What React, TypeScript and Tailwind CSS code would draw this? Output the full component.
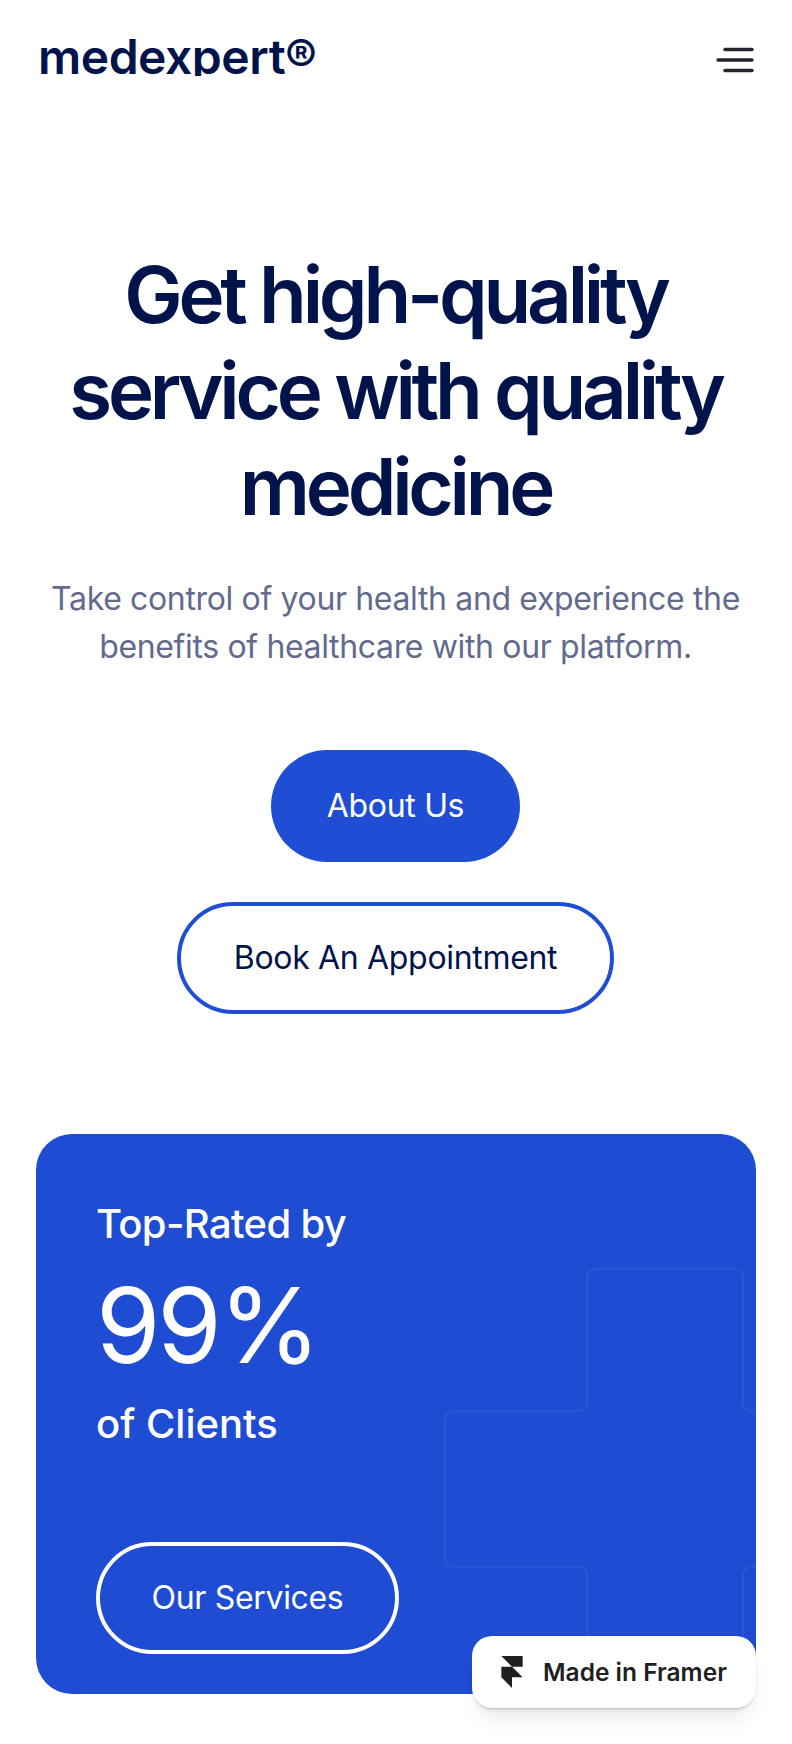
const navy = "text-[#00134a]";

function MenuIcon() {
  return (
    <svg width="38" height="26" viewBox="0 0 38 26" fill="none" stroke="#22242e" strokeWidth="3.4" strokeLinecap="round">
      <path d="M9 2.5h27" />
      <path d="M2 13h34" />
      <path d="M9 23.5h27" />
    </svg>
  );
}

function FramerMark() {
  return (
    <svg width="22" height="32" viewBox="0 0 14 21" fill="#1f1f1f">
      <path d="M0 0h14v7H7zM0 7h7l7 7H7v7l-7-7z" />
    </svg>
  );
}

function PlusOutline() {
  return (
    <svg className="absolute left-0 top-0" width="720" height="560" viewBox="0 0 720 560" fill="none" stroke="#ffffff" strokeOpacity="0.1" strokeWidth="1.2">
      <path d="M551 143a8 8 0 0 1 8 -8h140a8 8 0 0 1 8 8v126a8 8 0 0 0 8 8h5" />
      <path d="M551 143v126a8 8 0 0 1 -8 8H417a8 8 0 0 0 -8 8v140a8 8 0 0 0 8 8h126a8 8 0 0 1 8 8v80" />
      <path d="M707 560v-119a8 8 0 0 1 8 -8h5" />
    </svg>
  );
}

export default function App() {
  return (
    <main className="relative h-[1744px] overflow-hidden bg-white font-['Inter',sans-serif]">
      {/* Header */}
      <header className="flex items-start justify-between pl-[38px] pr-[38px] pt-[30px]">
        <div className={`h-[46px] overflow-hidden text-[48px] font-semibold leading-[54px] tracking-[-0.01em] ${navy}`}>
          medexpert®
        </div>
        <div className="pt-[17px]">
          <MenuIcon />
        </div>
      </header>

      {/* Hero */}
      <section className="mt-[171px] flex flex-col items-center pl-[36px] pr-[37px] text-center">
        <h1 className={`text-[78px] font-semibold leading-[96px] tracking-[-0.054em] ${navy}`}>
          Get high-quality
          <br />
          service with quality
          <br />
          medicine
        </h1>
        <p className="mt-[40px] text-[32px] leading-[48px] tracking-[-0.011em] text-[#636a8c]">
          Take control of your health and experience the
          <br />
          benefits of healthcare with our platform.
        </p>
        <div className="mt-[79px] flex flex-col items-center gap-[40px]">
          <a className="flex h-[112px] w-[249px] items-center justify-center rounded-[56px] bg-[#1f4dd4] text-[32px] tracking-[-0.01em] text-white">
            About Us
          </a>
          <a className={`flex h-[112px] w-[437px] items-center justify-center rounded-[56px] border-4 border-[#1f4dd4] text-[32px] tracking-[-0.01em] ${navy}`}>
            Book An Appointment
          </a>
        </div>
      </section>

      {/* Rating card */}
      <section className="relative mx-[36px] mt-[120px] h-[560px] overflow-hidden rounded-[36px] bg-[#1e4cd3] pl-[60px] pt-[66px] text-white">
        <PlusOutline />
        <div className="relative flex flex-col items-start">
          <p className="text-[40px] font-medium leading-[48px] tracking-[-0.016em]">Top-Rated by</p>
          <p className="mt-[21px] text-[104px] leading-[112px] tracking-[-0.03em]">99%</p>
          <p className="mt-[19px] text-[40px] font-medium leading-[48px]">of Clients</p>
          <a className="mt-[94px] flex h-[112px] w-[303px] items-center justify-center rounded-[56px] border-4 border-white text-[32px] tracking-[-0.01em]">
            Our Services
          </a>
        </div>
      </section>

      {/* Framer badge */}
      <a className="absolute bottom-[36px] right-[36px] flex h-[72px] w-[284px] items-center gap-[20px] rounded-[20px] bg-white pl-[29px] text-[24.5px] font-semibold text-[#1f1f1f] shadow-[0_1px_1px_-1px_rgba(0,0,0,0.25),0_4px_4px_-3px_rgba(0,0,0,0.2),0_16px_20px_-6px_rgba(0,0,0,0.08),0_0_0_1px_rgba(0,0,0,0.03)]">
        <FramerMark />
        Made in Framer
      </a>
    </main>
  );
}
